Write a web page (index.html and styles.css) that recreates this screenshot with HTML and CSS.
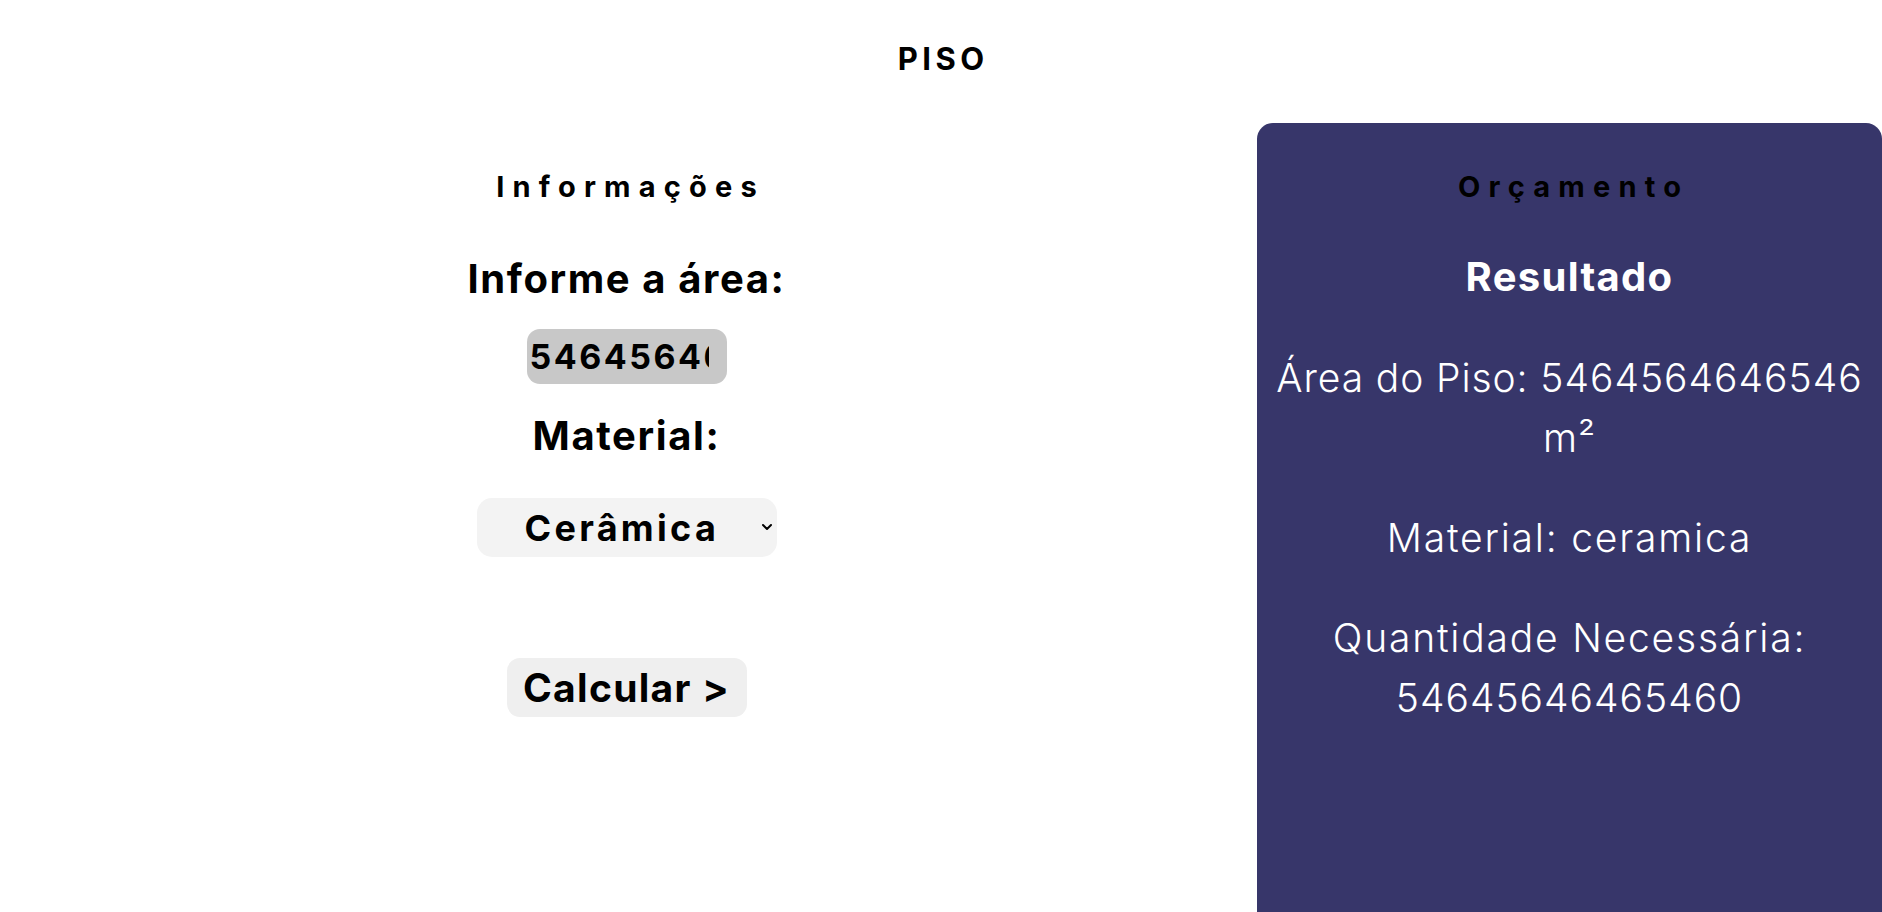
FILE: index.html
```html
<!DOCTYPE html>
<html lang="pt-BR">
<head>
<meta charset="utf-8">
<title>Piso</title>
<link rel="stylesheet" href="styles.css">
</head>
<body>
<header class="top">
  <h1 class="brand">PISO</h1>
</header>
<main class="layout">
  <section class="form-col">
    <h2 class="section-title">Informações</h2>
    <label class="field-label field-label--area" for="area">Informe a área:</label>
    <input class="area-input" id="area" type="text" value="5464564646546">
    <label class="field-label field-label--material" for="material">Material:</label>
    <div class="select-wrap">
      <select class="material-select" id="material">
        <option>Cerâmica</option>
      </select>
      <svg class="select-arrow" width="12" height="8" viewBox="0 0 12 8" aria-hidden="true">
        <path d="M2 2 L6 6 L10 2" fill="none" stroke="#000" stroke-width="2" stroke-linecap="round" stroke-linejoin="round"/>
      </svg>
    </div>
    <button class="calc-btn" type="button">Calcular &gt;</button>
  </section>
  <aside class="result-panel">
    <h2 class="section-title">Orçamento</h2>
    <h3 class="result-title">Resultado</h3>
    <p class="result-line result-line--first">Área do Piso: <span class="num">5464564646546</span> m²</p>
    <p class="result-line">Material: ceramica</p>
    <p class="result-line">Quantidade Necessária: <span class="num">54645646465460</span></p>
  </aside>
</main>
</body>
</html>
```

FILE: styles.css
```css
* {
  box-sizing: border-box;
}

html, body {
  margin: 0;
  padding: 0;
  background: #ffffff;
}

body {
  font-family: "Inter", "Noto Sans", "DejaVu Sans", sans-serif;
  color: #000;
  overflow: hidden;
}

.top {
  padding-top: 39px;
  display: flex;
  justify-content: center;
}

.brand {
  margin: 0;
  font-size: 31px;
  line-height: 40px;
  font-weight: 700;
  letter-spacing: 4.5px;
  padding-left: 4.5px;
}

.layout {
  margin-top: 44px;
  display: grid;
  grid-template-columns: 1257px 1fr;
}

.form-col {
  display: flex;
  flex-direction: column;
  align-items: center;
  padding-top: 44px;
  padding-right: 4px;
}

.section-title {
  margin: 0;
  font-size: 29px;
  line-height: 40px;
  font-weight: 700;
  letter-spacing: 8.2px;
  padding-left: 8.2px;
  text-align: center;
  color: #000;
}

.field-label {
  font-size: 40px;
  line-height: 60px;
  font-weight: 700;
  letter-spacing: 1.6px;
}

.field-label--area {
  margin-top: 42px;
}

.area-input {
  margin-top: 20px;
  width: 200px;
  height: 55px;
  border: none;
  border-radius: 13px;
  background: #c8c8c8;
  padding: 0 18px 0 3px;
  font-family: inherit;
  font-size: 34px;
  font-weight: 700;
  letter-spacing: 2.5px;
  color: #000;
  outline: none;
}

.field-label--material {
  margin-top: 22px;
}

.select-wrap {
  position: relative;
  margin-top: 32px;
  width: 300px;
  height: 59px;
}

.material-select {
  appearance: none;
  -webkit-appearance: none;
  width: 100%;
  height: 100%;
  border: none;
  border-radius: 15px;
  background: #f3f3f3;
  padding: 0 0 0 48px;
  font-family: inherit;
  font-size: 36px;
  font-weight: 700;
  letter-spacing: 3.3px;
  color: #000;
  outline: none;
}

.select-arrow {
  position: absolute;
  left: 284px;
  top: 25px;
  pointer-events: none;
}

.calc-btn {
  margin-top: 101px;
  width: 240px;
  height: 59px;
  border: none;
  border-radius: 13px;
  background: #efefef;
  font-family: inherit;
  font-size: 39px;
  font-weight: 700;
  letter-spacing: 1.3px;
  color: #000;
  padding: 0;
  cursor: pointer;
}

.result-panel {
  background: #37366a;
  border-radius: 16px 16px 0 0;
  min-height: 820px;
  padding: 44px 8px 0;
  text-align: center;
  color: #fff;
}

.result-title {
  margin: 40px 0 0;
  font-size: 40px;
  line-height: 60px;
  font-weight: 700;
  letter-spacing: 1.3px;
  color: #fff;
}

.result-line {
  margin: 40px 0 0;
  font-size: 39px;
  line-height: 60px;
  font-weight: 300;
  letter-spacing: 1.8px;
}

.result-line .num {
  letter-spacing: 1px;
}

.result-line--first {
  margin-top: 41px;
  letter-spacing: 0.9px;
}
```
